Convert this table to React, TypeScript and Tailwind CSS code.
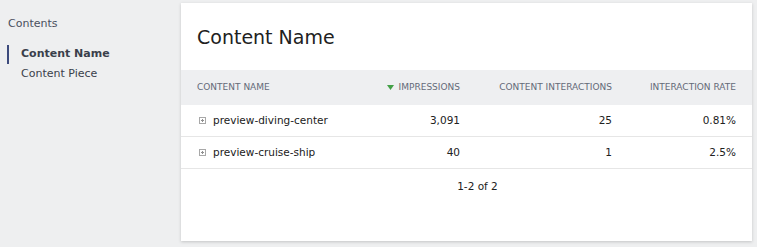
const rows = [
  { name: 'preview-diving-center', impressions: '3,091', interactions: '25', rate: '0.81%' },
  { name: 'preview-cruise-ship', impressions: '40', interactions: '1', rate: '2.5%' },
]

function PlusBox() {
  return (
    <svg width="7" height="7" viewBox="0 0 7 7" className="shrink-0">
      <rect x="0.5" y="0.5" width="6" height="6" fill="none" stroke="#a8a8a8" />
      <path d="M2 3.5h3M3.5 2v3" stroke="#909090" />
    </svg>
  )
}

export default function App() {
  return (
    <div
      className="flex h-[247px] w-[757px] bg-[#eeeff0] text-[#212121]"
      style={{ fontFamily: '"DejaVu Sans", Verdana, sans-serif' }}
    >
      {/* Sidebar */}
      <div className="w-[181px] shrink-0 pt-[16px] text-[11px]">
        <div className="pl-[8px] text-[#4a505e]">Contents</div>
        <div className="mt-[12px] flex flex-col">
          <div className="ml-[7px] flex h-[19px] items-center border-l-[2px] border-[#3c4a7c] pl-[12px] font-bold text-[#3a3f4b]">
            Content Name
          </div>
          <div className="flex h-[21px] items-center pl-[21px] text-[#3a3f4b]">Content Piece</div>
        </div>
      </div>

      {/* Card */}
      <div className="mt-[3px] flex h-[238px] w-[571px] flex-col bg-white shadow-[0_1px_3px_rgba(0,0,0,0.18)]">
        <div className="flex h-[67px] items-center px-4 pt-[2px] text-[19px]">Content Name</div>

        <div className="flex h-[35px] items-center bg-[#eeeff1] px-4 text-[9px] text-[#646a78]">
          <div className="flex-1 whitespace-nowrap">CONTENT NAME</div>
          <div className="flex w-[110px] items-center justify-end gap-[5px]">
            <svg width="7" height="5" viewBox="0 0 7 5">
              <path d="M0 0h7L3.5 5z" fill="#43a047" />
            </svg>
            IMPRESSIONS
          </div>
          <div className="w-[152px] text-right">CONTENT INTERACTIONS</div>
          <div className="w-[124px] text-right">INTERACTION RATE</div>
        </div>

        {rows.map((r) => (
          <div
            key={r.name}
            className="flex h-[32px] items-center border-b border-[#e6e6e6] px-4 text-[10.5px]"
          >
            <div className="flex flex-1 items-center gap-[7px] whitespace-nowrap pl-[2px]">
              <PlusBox />
              {r.name}
            </div>
            <div className="w-[110px] text-right">{r.impressions}</div>
            <div className="w-[152px] text-right">{r.interactions}</div>
            <div className="w-[124px] text-right">{r.rate}</div>
          </div>
        ))}

        <div className="flex h-[36px] items-center justify-center pl-[22px] text-[10.5px]">1-2 of 2</div>
      </div>
    </div>
  )
}
